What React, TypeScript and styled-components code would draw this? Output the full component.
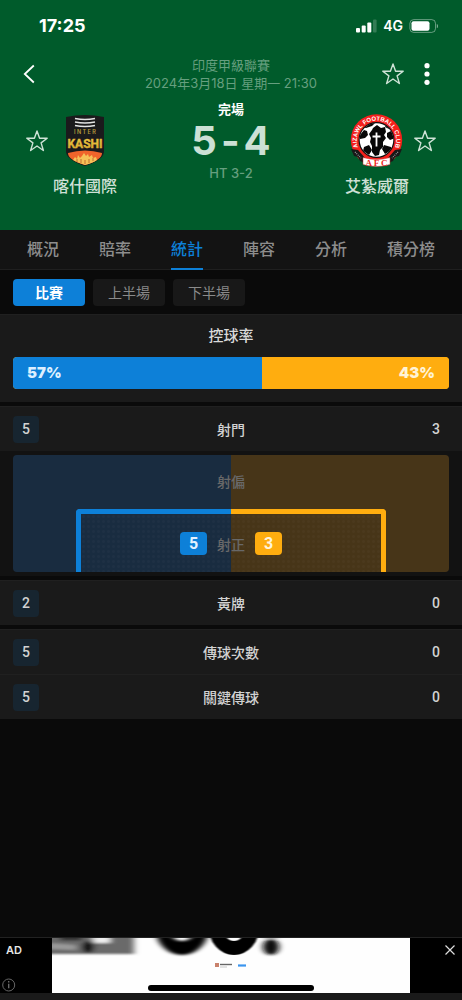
import React, { useState } from 'react';
import styled, { createGlobalStyle } from 'styled-components';

const BLUE = '#0d80d8';
const AMBER = '#ffad0f';

const GlobalStyle = createGlobalStyle`
  * { box-sizing: border-box; }
  body {
    margin: 0;
    background: #0a0a0a;
    font-family: Inter, 'Noto Sans CJK TC', sans-serif;
  }
  button {
    margin: 0;
    padding: 0;
    border: 0;
    background: none;
    color: inherit;
    font: inherit;
    cursor: pointer;
  }
  svg { display: block; }
  h1, h2, p { margin: 0; font: inherit; }
`;

const Screen = styled.div`
  display: flex;
  flex-direction: column;
  min-height: 100vh;
  background: #0a0a0a;
`;

const Header = styled.header`
  background: #005b2b;
  padding-bottom: 32px;
  color: #fff;
`;

const StatusBar = styled.div`
  display: flex;
  align-items: center;
  justify-content: space-between;
  height: 52px;
  padding: 0 23px 0 39px;
`;

const Clock = styled.time`
  font-size: 18px;
  font-weight: 700;
  line-height: 20px;
`;

const StatusIcons = styled.div`
  display: flex;
  align-items: center;
  gap: 6px;
  font-size: 14px;
  font-weight: 600;
  line-height: 20px;
`;

const TopBar = styled.div`
  display: grid;
  grid-template-columns: 60px 1fr 60px;
  align-items: center;
  height: 44px;
  padding: 0 22px;
`;

const IconButton = styled.button<{ $width: number }>`
  display: flex;
  align-items: center;
  justify-content: center;
  width: ${p => p.$width}px;
  height: 24px;
`;

const Actions = styled.div`
  display: flex;
  justify-content: flex-end;
  gap: 12px;
  padding-right: 2px;
`;

const MatchInfo = styled.div`
  color: #669f7f;
  font-size: 13px;
  line-height: 18px;
  text-align: center;
  white-space: nowrap;
`;

const Scoreboard = styled.div`
  display: flex;
  align-items: flex-start;
  gap: 5px;
  padding: 4px 26px 0;
`;

const StarSlot = styled.div`
  padding-top: 29px;
`;

const Team = styled.div`
  display: flex;
  flex-direction: column;
  align-items: center;
  gap: 7px;
  padding-top: 14px;
`;

const TeamName = styled.h2`
  color: #cfe0d6;
  font-size: 16px;
  font-weight: 500;
  line-height: 24px;
  white-space: nowrap;
`;

const ScoreColumn = styled.div`
  flex: 1;
  text-align: center;
`;

const MatchState = styled.p`
  font-size: 13px;
  font-weight: 700;
  line-height: 18px;
`;

const Score = styled.h1`
  display: flex;
  justify-content: center;
  gap: 4px;
  color: #cce0d5;
  font-size: 40px;
  font-weight: 700;
  line-height: 46px;
`;

const HalfTime = styled.p`
  color: #669f7f;
  font-size: 13px;
  font-weight: 500;
  line-height: 18px;
`;

const Tabs = styled.nav`
  display: flex;
  justify-content: space-between;
  height: 40px;
  padding: 0 27px;
  background: #131313;
  border-bottom: 1px solid #1f1f1f;
`;

const Tab = styled.button<{ $active: boolean }>`
  height: 40px;
  border-bottom: 2px solid ${p => (p.$active ? BLUE : 'transparent')};
  color: ${p => (p.$active ? BLUE : '#8d8d8d')};
  font-size: 16px;
  font-weight: 500;
  line-height: 38px;
  white-space: nowrap;
`;

const Periods = styled.div`
  display: flex;
  gap: 8px;
  padding: 9px 13px 8px;
`;

const Period = styled.button<{ $active: boolean }>`
  width: 72px;
  height: 27px;
  border-radius: 4px;
  background: ${p => (p.$active ? BLUE : '#181818')};
  color: ${p => (p.$active ? '#fff' : '#8a8a8a')};
  font-size: 14px;
  font-weight: ${p => (p.$active ? 700 : 400)};
  line-height: 27px;
`;

const Panel = styled.section`
  margin-bottom: 4px;
  background: #1a1a1a;
  border-top: 1px solid #202020;
`;

const PossessionPanel = styled(Panel)`
  padding: 9px 13px 13px;
`;

const PossessionTitle = styled.h2`
  padding-bottom: 9px;
  color: #d9d9d9;
  font-size: 15px;
  font-weight: 500;
  line-height: 24px;
  text-align: center;
`;

const PossessionBar = styled.div`
  display: flex;
  overflow: hidden;
  border-radius: 4px;
  background: ${AMBER};
`;

const Share = styled.div<{ $side: 'home' | 'away' }>`
  padding: 0 14px;
  background: ${p => (p.$side === 'home' ? BLUE : AMBER)};
  color: ${p => (p.$side === 'home' ? '#dcefff' : '#fff3d6')};
  font-size: 15px;
  font-weight: 900;
  line-height: 32px;
  text-align: ${p => (p.$side === 'home' ? 'left' : 'right')};
`;

const StatRow = styled.div`
  display: grid;
  grid-template-columns: 26px 1fr 26px;
  align-items: center;
  height: 44px;
  padding: 0 13px;
  color: #d2d2d2;
  font-size: 14px;
  font-weight: 500;
  line-height: 27px;
  text-align: center;

  & + & {
    height: 45px;
    border-top: 1px solid #202020;
  }
`;

const StatValue = styled.span<{ $lead?: boolean }>`
  border-radius: 4px;
  background: ${p => (p.$lead ? '#172530' : 'transparent')};
  font-family: Roboto, sans-serif;
`;

const ShotArea = styled.div`
  padding: 4px 13px;
  background: #121212;
`;

const ShotMap = styled.div`
  overflow: hidden;
  border-radius: 4px;
  background: linear-gradient(90deg, #192c40 50%, #473518 50%);
  color: #686868;
  font-size: 14px;
  font-weight: 500;
  text-align: center;
`;

const OffTarget = styled.p`
  line-height: 54px;
`;

const GoalFrame = styled.div`
  display: grid;
  grid-template-columns: 1fr 1fr;
  height: 63px;
  margin: 0 63px;
`;

const Post = styled.div<{ $side: 'home' | 'away' }>`
  grid-row: 1;
  grid-column: ${p => (p.$side === 'home' ? 1 : 2)};
  border-top: 5px solid ${p => (p.$side === 'home' ? BLUE : AMBER)};
  border-left: ${p => (p.$side === 'home' ? `5px solid ${BLUE}` : '0')};
  border-right: ${p => (p.$side === 'away' ? `5px solid ${AMBER}` : '0')};
  border-radius: ${p => (p.$side === 'home' ? '4px 0 0 0' : '0 4px 0 0')};
  background: radial-gradient(circle, rgba(255, 255, 255, 0.02) 1px, transparent 2px) 0 0 / 5px 5px;
`;

const OnTarget = styled.div`
  display: flex;
  grid-row: 1;
  grid-column: 1 / 3;
  align-items: center;
  justify-content: center;
  gap: 10px;
  padding-top: 6px;
`;

const ShotCount = styled.span<{ $side: 'home' | 'away' }>`
  width: 27px;
  border-radius: 4px;
  background: ${p => (p.$side === 'home' ? BLUE : AMBER)};
  color: ${p => (p.$side === 'home' ? '#e4f2ff' : '#fff4dc')};
  font-family: Roboto, sans-serif;
  font-size: 16px;
  font-weight: 700;
  line-height: 23px;
`;

const AdBar = styled.footer`
  position: relative;
  display: grid;
  grid-template-columns: 52px 1fr 52px;
  height: 63px;
  margin-top: auto;
  border-top: 1px solid #222;
  border-bottom: 7px solid #1a1a1a;
  background: #000;
`;

const AdSide = styled.div`
  display: flex;
  flex-direction: column;
  justify-content: space-between;
  padding: 2px 0 0 2px;
  color: #e6e6e6;
  font-size: 11px;
  font-weight: 600;
  line-height: 20px;
`;

const AdLabel = styled.span`
  padding-left: 4px;
`;

const AdClose = styled.div`
  display: flex;
  justify-content: flex-end;
  padding-right: 4px;
`;

const Banner = styled.div`
  overflow: hidden;
  background: #fefefe;
`;

const HomeIndicator = styled.div`
  position: absolute;
  bottom: 2px;
  left: 50%;
  width: 166px;
  height: 6px;
  border-radius: 3px;
  background: #000;
  transform: translateX(-50%);
`;

const Star = () => (
  <svg width="22" height="22" viewBox="0 0 22 22" fill="none" stroke="#cfe3d7" strokeWidth="1.4" strokeLinejoin="round">
    <path d="M11 1l2.600 7.200h7.600l-6.100 4.700 2.300 7.600-6.400-4.500-6.400 4.500 2.300-7.600L.8 8.200h7.600z" />
  </svg>
);

const Signal = () => (
  <svg width="21" height="14" viewBox="0 0 21 14" fill="#fff">
    <rect x="0" y="9" width="4" height="4.5" rx="1" />
    <rect x="5.7" y="6.5" width="4" height="7" rx="1" />
    <rect x="11.3" y="3.5" width="4" height="10" rx="1" />
    <rect x="17" y="0.5" width="3.6" height="13" rx="1" opacity="0.2" />
  </svg>
);

const Battery = () => (
  <svg width="30" height="14" viewBox="0 0 30 14">
    <rect x="0.9" y="0.6" width="25.6" height="12.8" rx="3.8" fill="none" stroke="#fff" strokeOpacity="0.4" />
    <rect x="2.5" y="2.3" width="18" height="9.4" rx="2" fill="#fff" />
    <path d="M27.8 4.900c1.600.5 1.600 3.700 0 4.200z" fill="#fff" fillOpacity="0.5" />
  </svg>
);

const KashiCrest = () => (
  <svg width="38" height="53" viewBox="0 0 38 53" role="img" aria-label="Inter Kashi">
    <defs>
      <clipPath id="shield">
        <path d="M0 3Q19-1 38 3V38Q37 46 19 52 1 46 0 38z" />
      </clipPath>
      <linearGradient id="gold" x1="0" x2="0" y1="0" y2="1">
        <stop offset="0" stopColor="#f1d04c" />
        <stop offset="1" stopColor="#d0a026" />
      </linearGradient>
    </defs>
    <g clipPath="url(#shield)">
      <path d="M0 0h38v53H0z" fill="#1b1a1c" />
      <path d="M2 39Q19 34 36 39 36 46 19 51 2 46 2 39z" fill="#f0642b" />
      <path d="M7 46l2-3 2 2 1-4 2 3 2-2 2-3 2 3 2-2 1 3 3-2 1 3 3-1 1 3Q27 49 19 51 10 48 7 46z" fill="#f6c258" />
      <path d="M11 48v-3M15 49v-4M19 50v-4M23 49v-4M27 47v-3" stroke="#a94b1c" strokeWidth="0.7" />
    </g>
    <path d="M9 4.500q10 2 20 0M9 8q10 2 20 0M9 11.500q10 2 20 0" fill="none" stroke="#e4e4e4" strokeWidth="1.700" />
    <text x="19" y="19.500" textAnchor="middle" fill="#b59a3c" fontFamily="Inter" fontSize="5.500" fontWeight="600">I N T E R</text>
    <text x="19" y="34" textAnchor="middle" fill="url(#gold)" stroke="#e0b838" strokeWidth="0.400" fontFamily="'Liberation Sans Narrow', Roboto, sans-serif" fontSize="12" fontWeight="700">KASHI</text>
  </svg>
);

const AizawlCrest = () => (
  <svg width="53" height="53" viewBox="0 0 53 53" role="img" aria-label="Aizawl Football Club">
    <defs>
      <path id="ring" d="M8.800 35A19.700 19.700 0 1 1 44.200 35" />
      <clipPath id="ball"><circle cx="26.500" cy="26" r="17" /></clipPath>
    </defs>
    <circle cx="26.500" cy="26" r="25.700" fill="#f4201c" />
    <circle cx="26.500" cy="26" r="18" fill="#111" />
    <circle cx="26.500" cy="26" r="16.800" fill="#fff" />
    <g clipPath="url(#ball)" fill="#080808">
      <path d="M10 21l4-5 3 1 1 4-3 3-5 1zM14 33l5-2 3 5-3 5-6-4zM44 20l-3-3-4 2 0 4 3 3 5-2zM41 33l-7-2-2 4 3 5 7-4zM14 14l9-6 2 1-3 3-6 2zM36 11l5 4-2 0-4-2z" />
      <path d="M23 14l4-3 4 3 4-1 1 5-2 3 2 3-3 4 0 5-3 3-1 5-4 1-3-4 0-6-2-4 1-4-2-4 3-4z" />
    </g>
    <path d="M26.500 18.500v14M22.500 22.500h8" stroke="#fff" strokeWidth="1.800" />
    <text fill="#fff" fontFamily="Liberation Sans, sans-serif" fontSize="6" fontWeight="700">
      <textPath href="#ring" startOffset="50%" textAnchor="middle">AIZAWL FOOTBALL CLUB</textPath>
    </text>
    <path d="M1 35l7 1 8 9-1 4-5-2-2-4-4-1zM52 35l-7 1-8 9 1 4 5-2 2-4 4-1z" fill="#181818" />
    <path d="M5 38l6 6M48 38l-6 6" stroke="#999" strokeWidth="1.200" strokeDasharray="1 1" />
    <path d="M13 43.500q13.500 4 27 0v7q-13.500 4-27 0z" fill="#fff" stroke="#c33" strokeWidth="0.500" />
    <text x="26.500" y="51.500" textAnchor="middle" fill="#ee2824" fontFamily="Liberation Serif, serif" fontSize="9" fontWeight="700">A F C</text>
  </svg>
);

const BannerArt = () => (
  <svg width="358" height="55" viewBox="0 0 358 55" role="img" aria-label="Advertisement">
    <defs>
      <filter id="soft" x="-20%" y="-20%" width="140%" height="140%">
        <feGaussianBlur stdDeviation="3 1" />
      </filter>
      <filter id="faint" x="-20%" y="-20%" width="140%" height="140%">
        <feGaussianBlur stdDeviation="1 0.6" />
      </filter>
    </defs>
    <g filter="url(#soft)">
      <path d="M-8-8H82V16H-8z" fill="#6b6b6b" />
      <path d="M40-4h18v9H42z" fill="#eee" />
      <path d="M-4 5L24 7 24 12-4 11z" fill="#999" />
      <ellipse cx="36" cy="9" rx="6" ry="6" fill="#111" />
      <path d="M8 0h22" stroke="#333" strokeWidth="5" />
      <ellipse cx="130" cy="-8" rx="19" ry="18" fill="none" stroke="#000" strokeWidth="14" />
      <circle cx="219" cy="9" r="8" fill="#111" />
      <path d="M212-1h14" stroke="#999" strokeWidth="3" />
    </g>
    <ellipse cx="182" cy="-10" rx="18" ry="20" fill="none" stroke="#000" strokeWidth="14" filter="url(#faint)" />
    <rect x="163" y="25" width="4" height="4" fill="#c9826c" />
    <path d="M168 26.500h12" stroke="#666" strokeWidth="1.400" />
    <path d="M168 29h7" stroke="#bbb" strokeWidth="0.800" />
    <path d="M186 27.500h8" stroke="#3b95ee" strokeWidth="2.200" />
  </svg>
);

const tabNames = ['概況', '賠率', '統計', '陣容', '分析', '積分榜'];
const periodNames = ['比賽', '上半場', '下半場'];

type StatProps = { label: string; home: number; away: number };

const Stat = ({ label, home, away }: StatProps) => (
  <StatRow>
    <StatValue $lead={home > away}>{home}</StatValue>
    <span>{label}</span>
    <StatValue $lead={away > home}>{away}</StatValue>
  </StatRow>
);

export default function App() {
  const [tab, setTab] = useState('統計');
  const [period, setPeriod] = useState('比賽');
  const possession = { home: 57, away: 43 };

  return (
    <Screen>
      <GlobalStyle />
      <Header>
        <StatusBar>
          <Clock>17:25</Clock>
          <StatusIcons>
            <Signal />
            <span>4G</span>
            <Battery />
          </StatusIcons>
        </StatusBar>
        <TopBar>
          <IconButton $width={14} aria-label="返回">
            <svg width="14" height="20" viewBox="0 0 14 20" fill="none" stroke="#fff" strokeWidth="1.800">
              <path d="M11.800 1.500L2.800 10l9 8.500" />
            </svg>
          </IconButton>
          <MatchInfo>
            <p>印度甲級聯賽</p>
            <p>2024年3月18日 星期一 21:30</p>
          </MatchInfo>
          <Actions>
            <IconButton $width={22} aria-label="收藏比賽"><Star /></IconButton>
            <IconButton $width={22} aria-label="更多">
              <svg width="6" height="22" viewBox="0 0 6 22" fill="#fff">
                <circle cx="3" cy="2.700" r="2.600" />
                <circle cx="3" cy="11" r="2.600" />
                <circle cx="3" cy="19.300" r="2.600" />
              </svg>
            </IconButton>
          </Actions>
        </TopBar>
        <Scoreboard>
          <StarSlot>
            <IconButton $width={22} aria-label="收藏喀什國際"><Star /></IconButton>
          </StarSlot>
          <Team>
            <KashiCrest />
            <TeamName>喀什國際</TeamName>
          </Team>
          <ScoreColumn>
            <MatchState>完場</MatchState>
            <Score>
              <span>5</span>
              <span>-</span>
              <span>4</span>
            </Score>
            <HalfTime>HT 3-2</HalfTime>
          </ScoreColumn>
          <Team>
            <AizawlCrest />
            <TeamName>艾紮威爾</TeamName>
          </Team>
          <StarSlot>
            <IconButton $width={22} aria-label="收藏艾紮威爾"><Star /></IconButton>
          </StarSlot>
        </Scoreboard>
      </Header>

      <Tabs>
        {tabNames.map(name => (
          <Tab key={name} $active={name === tab} onClick={() => setTab(name)}>{name}</Tab>
        ))}
      </Tabs>
      <Periods>
        {periodNames.map(name => (
          <Period key={name} $active={name === period} onClick={() => setPeriod(name)}>{name}</Period>
        ))}
      </Periods>

      <PossessionPanel>
        <PossessionTitle>控球率</PossessionTitle>
        <PossessionBar>
          <Share $side="home" style={{ width: `${possession.home}%` }}>{possession.home}%</Share>
          <Share $side="away" style={{ width: `${possession.away}%` }}>{possession.away}%</Share>
        </PossessionBar>
      </PossessionPanel>

      <Panel>
        <Stat label="射門" home={5} away={3} />
        <ShotArea>
          <ShotMap>
            <OffTarget>射偏</OffTarget>
            <GoalFrame>
              <Post $side="home" />
              <Post $side="away" />
              <OnTarget>
                <ShotCount $side="home">5</ShotCount>
                <span>射正</span>
                <ShotCount $side="away">3</ShotCount>
              </OnTarget>
            </GoalFrame>
          </ShotMap>
        </ShotArea>
      </Panel>
      <Panel>
        <Stat label="黃牌" home={2} away={0} />
      </Panel>
      <Panel>
        <Stat label="傳球次數" home={5} away={0} />
        <Stat label="關鍵傳球" home={5} away={0} />
      </Panel>

      <AdBar>
        <AdSide>
          <AdLabel>AD</AdLabel>
          <svg width="14" height="16" viewBox="0 0 14 16" fill="none" stroke="#666">
            <circle cx="6.700" cy="8" r="6" />
            <path d="M6.700 6.800v4.500M6.700 4v1.500" strokeWidth="1.400" />
          </svg>
        </AdSide>
        <Banner><BannerArt /></Banner>
        <AdClose>
          <IconButton $width={16} aria-label="關閉廣告">
            <svg width="12" height="12" viewBox="0 0 12 12" stroke="#ddd" strokeWidth="1.200">
              <path d="M1.500 1.500l9 9M10.500 1.500l-9 9" />
            </svg>
          </IconButton>
        </AdClose>
        <HomeIndicator />
      </AdBar>
    </Screen>
  );
}
